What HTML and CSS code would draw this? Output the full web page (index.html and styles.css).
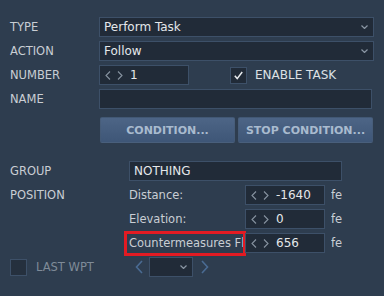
FILE: index.html
```html
<!DOCTYPE html>
<html lang="en">
<head>
  <meta charset="UTF-8" />
  <title>Task Properties</title>
  <link rel="stylesheet" href="styles.css">
</head>
<body>
  <div class="form">
    <div class="row">
      <span class="lbl">TYPE</span>
      <div class="field select">Perform Task
        <svg class="chev" width="7" height="4" viewBox="0 0 7 4"><path d="M0.5 0.5 L3.5 3.5 L6.5 0.5" /></svg>
      </div>
    </div>
    <div class="row">
      <span class="lbl">ACTION</span>
      <div class="field select">Follow
        <svg class="chev" width="7" height="4" viewBox="0 0 7 4"><path d="M0.5 0.5 L3.5 3.5 L6.5 0.5" /></svg>
      </div>
    </div>
    <div class="row">
      <span class="lbl">NUMBER</span>
      <div class="field spin num">
        <svg class="arrows" width="18" height="9" viewBox="0 0 18 9"><path d="M5 0.5 L1 4.5 L5 8.5 M13 0.5 L17 4.5 L13 8.5" /></svg>
        <span>1</span>
      </div>
      <span class="check on">
        <svg width="9" height="9" viewBox="0 0 9 9"><path d="M0.8 4.8 L3.2 7.6 L8.2 1" /></svg>
      </span>
      <span class="check-text">ENABLE TASK</span>
    </div>
    <div class="row">
      <span class="lbl">NAME</span>
      <div class="field name"></div>
    </div>
    <div class="btn-row">
      <button class="btn">CONDITION...</button>
      <button class="btn">STOP CONDITION...</button>
    </div>

    <div class="row group">
      <span class="lbl wide">GROUP</span>
      <div class="field group-field">NOTHING</div>
    </div>
    <div class="row">
      <span class="lbl wide">POSITION</span>
      <span class="sub">Distance:</span>
      <div class="field spin small">
        <svg class="arrows" width="18" height="9" viewBox="0 0 18 9"><path d="M5 0.5 L1 4.5 L5 8.5 M13 0.5 L17 4.5 L13 8.5" /></svg>
        <span>-1640</span>
      </div>
      <span class="unit">feet</span>
    </div>
    <div class="row">
      <span class="lbl wide"></span>
      <span class="sub">Elevation:</span>
      <div class="field spin small">
        <svg class="arrows" width="18" height="9" viewBox="0 0 18 9"><path d="M5 0.5 L1 4.5 L5 8.5 M13 0.5 L17 4.5 L13 8.5" /></svg>
        <span>0</span>
      </div>
      <span class="unit">feet</span>
    </div>
    <div class="row">
      <span class="lbl wide"></span>
      <span class="sub marked">Countermeasures Flares</span>
      <div class="field spin small">
        <svg class="arrows" width="18" height="9" viewBox="0 0 18 9"><path d="M5 0.5 L1 4.5 L5 8.5 M13 0.5 L17 4.5 L13 8.5" /></svg>
        <span>656</span>
      </div>
      <span class="unit">feet</span>
    </div>
    <div class="row">
      <div class="lbl wide last">
        <span class="check off"></span>
        <span class="dim">LAST WPT</span>
      </div>
      <svg class="nav prev" width="8" height="14" viewBox="0 0 8 14"><path d="M7 1 L1.5 7 L7 13" /></svg>
      <div class="field wpt">
        <svg class="chev" width="7" height="4" viewBox="0 0 7 4"><path d="M0.5 0.5 L3.5 3.5 L6.5 0.5" /></svg>
      </div>
      <svg class="nav next" width="8" height="14" viewBox="0 0 8 14"><path d="M1 1 L6.5 7 L1 13" /></svg>
    </div>
  </div>
</body>
</html>
```

FILE: styles.css
```css
body {
  margin: 0;
  background: #2e3d4f;
  font-family: "DejaVu Sans", sans-serif;
  font-size: 11.5px;
  color: #c9ced4;
  width: 384px;
  height: 296px;
  overflow: hidden;
}

.form {
  padding: 17px 10px 0 10px;
}

.row {
  display: flex;
  align-items: center;
  height: 20px;
  margin-bottom: 4px;
}

.lbl {
  width: 89px;
  flex: none;
}

.lbl.wide {
  width: 119px;
}

.field {
  box-sizing: border-box;
  height: 20px;
  background: #212b38;
  border: 1px solid #3d5068;
  color: #e4e7ea;
  font-size: 12px;
  display: flex;
  align-items: center;
  padding-left: 4px;
  position: relative;
}

.select {
  flex: 1;
}

.chev {
  position: absolute;
  right: 5px;
  top: 7px;
  fill: none;
  stroke: #8a96a4;
  stroke-width: 1.2;
}

.spin {
  padding-left: 5px;
}

.arrows {
  fill: none;
  stroke: #8793a0;
  stroke-width: 1.1;
  margin-right: 7px;
  flex: none;
}

.num {
  width: 90px;
}

.check {
  box-sizing: border-box;
  width: 17px;
  height: 17px;
  background: #212b38;
  border: 1px solid #3d5068;
  display: inline-flex;
  align-items: center;
  justify-content: center;
  flex: none;
}

.check.on {
  margin-left: 41px;
}

.check svg {
  fill: none;
  stroke: #e8ebee;
  stroke-width: 1.5;
}

.check-text {
  margin-left: 8px;
  font-size: 12px;
  color: #dde1e5;
}

.name {
  flex: 1;
  margin-right: 2px;
}

.btn-row {
  display: flex;
  gap: 3px;
  margin: 8px 1px 0 90px;
  height: 26px;
}

.btn {
  width: 135px;
  height: 26px;
  border: 1px solid #45597180;
  border-radius: 2px;
  background: linear-gradient(#4d6586, #3e5677);
  color: #a9bbcf;
  font-family: "DejaVu Sans", sans-serif;
  font-weight: bold;
  font-size: 11px;
  padding: 0;
}

.row.group {
  margin-top: 18px;
}

.group-field {
  width: 213px;
}

.sub {
  width: 116px;
  flex: none;
  white-space: nowrap;
  overflow: hidden;
}

.sub.marked {
  box-sizing: border-box;
  width: 122px;
  height: 25px;
  margin-left: -5px;
  margin-right: -1px;
  padding-left: 2px;
  border: 3px solid #e31b23;
  display: flex;
  align-items: center;
}

.small {
  width: 80px;
  flex: none;
}

.unit {
  margin-left: 6px;
  width: 11px;
  overflow: hidden;
  white-space: nowrap;
}

.last {
  display: flex;
  align-items: center;
}

.check.off {
  background: #25303e;
}

.dim {
  margin-left: 9px;
  color: #7f8b98;
}

.nav {
  fill: none;
  stroke: #4a6b93;
  stroke-width: 1.6;
  flex: none;
}

.prev {
  margin-left: 6px;
}

.wpt {
  width: 44px;
  margin-left: 6px;
  flex: none;
}

.next {
  margin-left: 8px;
}
```
